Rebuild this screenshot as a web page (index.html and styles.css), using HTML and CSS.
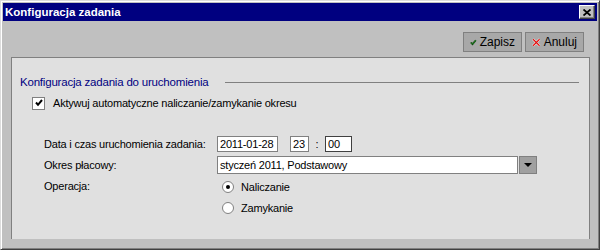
FILE: index.html
```html
<!DOCTYPE html>
<html lang="pl">
<head>
    <meta charset="UTF-8">
    <title>Konfiguracja zadania</title>
    <link rel="stylesheet" href="styles.css">
</head>
<body>
    <div class="window">
        <div class="titlebar">
            <span class="title">Konfiguracja zadania</span>
            <button class="close">
                <svg width="8" height="7" viewBox="0 0 8 7">
                    <path d="M0.5 0.5 L7.5 6.5 M7.5 0.5 L0.5 6.5" stroke="#000" stroke-width="1.8" fill="none"/>
                </svg>
            </button>
        </div>

        <div class="toolbar">
            <button class="tool">
                <svg width="12" height="11" viewBox="0 0 12 11">
                    <path d="M1.5 5.5 L4.5 8.5 L10.5 1.5" stroke="#0a3a0a" stroke-width="3" fill="none"/>
                    <path d="M1.5 5.5 L4.5 8.5 L10.5 1.5" stroke="#2fa02f" stroke-width="1.4" fill="none"/>
                </svg>
                Zapisz
            </button>
            <button class="tool">
                <svg width="12" height="11" viewBox="0 0 12 11">
                    <path d="M1.5 1 L10.5 10 M10.5 1 L1.5 10" stroke="#fff" stroke-width="3.2" fill="none"/>
                    <path d="M1.5 1 L10.5 10 M10.5 1 L1.5 10" stroke="#e01010" stroke-width="1.8" fill="none"/>
                </svg>
                Anuluj
            </button>
        </div>

        <div class="panel">
            <div class="section">
                <span class="section-title">Konfiguracja zadania do uruchomienia</span>
                <span class="section-line"></span>
            </div>

            <label class="check-row">
                <span class="checkbox">
                    <svg width="8" height="8" viewBox="0 0 8 8">
                        <path d="M1 3.5 L3 5.8 L7 1" stroke="#000" stroke-width="2" fill="none"/>
                    </svg>
                </span>
                Aktywuj automatyczne naliczanie/zamykanie okresu
            </label>

            <div class="form">
                <div class="label">Data i czas uruchomienia zadania:</div>
                <div class="field date-row">
                    <span class="edit date">2011-01-28</span>
                    <span class="edit hour">23</span>
                    <span class="colon">:</span>
                    <span class="edit minute">00</span>
                </div>

                <div class="label">Okres płacowy:</div>
                <div class="field">
                    <span class="edit combo">styczeń 2011, Podstawowy</span>
                    <span class="combo-btn"><span class="arrow"></span></span>
                </div>

                <div class="label radio-label">Operacja:</div>
                <div class="field radios">
                    <div class="radio-row">
                        <span class="radio checked"></span>
                        Naliczanie
                    </div>
                    <div class="radio-row">
                        <span class="radio"></span>
                        Zamykanie
                    </div>
                </div>
            </div>
        </div>
    </div>
</body>
</html>
```

FILE: styles.css
```css
body {
    margin: 0;
    font-family: "Liberation Sans", Arial, sans-serif;
    font-size: 11px;
    letter-spacing: -0.2px;
    color: #000;
    background-color: #c0c0c0;
    white-space: nowrap;
}

.window {
    width: 600px;
    height: 250px;
    box-sizing: border-box;
    background-color: #c0c0c0;
    border: 1px solid;
    border-color: #dcdcdc #404040 #404040 #dcdcdc;
    box-shadow: inset 1px 1px #fff, inset -1px -1px #808080;
    padding: 2px;
    display: flex;
    flex-direction: column;
}

.titlebar {
    flex: none;
    height: 18px;
    background-color: #000080;
    color: #fff;
    display: flex;
    align-items: center;
    justify-content: space-between;
    padding: 0 2px 0 2px;
}

.title {
    font-weight: bold;
    font-size: 11.5px;
    letter-spacing: 0;
}

.close {
    width: 16px;
    height: 14px;
    padding: 0;
    margin: 0;
    background-color: #c0c0c0;
    border: 1px solid;
    border-color: #fff #404040 #404040 #fff;
    box-shadow: inset -1px -1px #808080;
    display: flex;
    align-items: center;
    justify-content: center;
}

.toolbar {
    flex: none;
    display: flex;
    justify-content: flex-end;
    gap: 3px;
    padding: 11px 13px 0 0;
}

.tool {
    width: 59px;
    height: 20px;
    padding: 0 6px 0 6px;
    margin: 0;
    background-color: #a8a8a8;
    border: 1px solid #808080;
    font-family: inherit;
    font-size: 12px;
    letter-spacing: 0;
    color: #000;
    display: flex;
    align-items: center;
    gap: 3px;
}

.panel {
    margin: 5px 7px 8px 8px;
    flex: 1;
    background-color: #e0e0e0;
    border: 1px solid #808080;
    border-bottom: none;
    padding: 17px 10px 0 8px;
}

.section {
    display: flex;
    align-items: center;
    height: 14px;
}

.section-title {
    color: #000080;
    font-size: 11.5px;
}

.section-line {
    flex: 1;
    height: 1px;
    background-color: #808080;
    margin-left: 17px;
}

.check-row {
    display: flex;
    align-items: center;
    height: 14px;
    margin: 7px 0 0 12px;
    gap: 8px;
}

.checkbox {
    width: 11px;
    height: 11px;
    background-color: #fff;
    border: 1px solid #808080;
    display: flex;
    align-items: center;
    justify-content: center;
}

.form {
    display: grid;
    grid-template-columns: 173px auto;
    margin: 26px 0 0 24px;
    row-gap: 4px;
}

.label {
    display: flex;
    align-items: center;
}

.radio-label {
    align-items: flex-start;
    padding-top: 2px;
}

.field {
    display: flex;
    align-items: center;
}

.edit {
    background-color: #fff;
    border: 1px solid #808080;
    height: 14px;
    line-height: 14px;
    padding: 0 2px;
    box-sizing: content-box;
}

.date {
    width: 55px;
}

.hour {
    width: 13px;
    margin-left: 12px;
}

.colon {
    width: 16px;
    text-align: center;
}

.minute {
    width: 21px;
    border-color: #404040;
}

.combo {
    width: 295px;
    height: 16px;
    line-height: 16px;
}

.combo-btn {
    width: 16px;
    height: 16px;
    margin-left: 1px;
    background-color: #a0a0a0;
    border: 1px solid #808080;
    display: flex;
    align-items: center;
    justify-content: center;
}

.arrow {
    width: 0;
    height: 0;
    border-left: 4px solid transparent;
    border-right: 4px solid transparent;
    border-top: 4px solid #000;
}

.radios {
    flex-direction: column;
    align-items: flex-start;
    margin-top: -2px;
}

.radio-row {
    display: flex;
    align-items: center;
    height: 21px;
    gap: 7px;
    padding-left: 5px;
}

.radio {
    width: 10px;
    height: 10px;
    border-radius: 50%;
    background-color: #fff;
    border: 1px solid #808080;
    display: flex;
    align-items: center;
    justify-content: center;
}

.radio.checked::after {
    content: "";
    width: 4px;
    height: 4px;
    border-radius: 50%;
    background-color: #000;
}
```
